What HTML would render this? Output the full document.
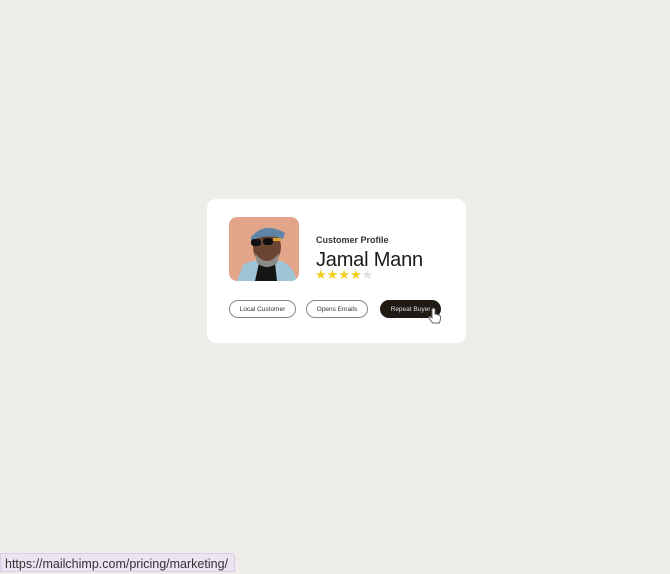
<!DOCTYPE html>
<html><head><style>
body{margin:0;width:670px;height:572px;background:#efedea;font-family:"Liberation Sans",sans-serif;position:relative;overflow:hidden}
.card{position:absolute;left:207px;top:199px;width:259px;height:144px;background:#fff;border-radius:9px}
.photo{position:absolute;left:22px;top:18px;width:70px;height:64px;border-radius:8px;background:#e2a58a;overflow:hidden}
.t1{position:absolute;left:109px;top:36px;font-size:9px;font-weight:bold;color:#333}
.t2{position:absolute;left:109px;top:50px;font-size:20px;color:#1c1a17;letter-spacing:-0.2px}
.stars{position:absolute;left:108px;top:68px;font-size:13px;color:#f3cd1b;letter-spacing:0px}
.pill{position:absolute;top:101px;height:16px;border:1.5px solid #888;border-radius:10px;font-size:6.5px;display:flex;align-items:center;justify-content:center;color:#333;box-sizing:content-box}
.bar{position:absolute;left:0;top:553px;width:235px;height:19px;background:#ece3f3;border:1px solid #d8cde4;border-radius:0 4px 0 0;font-size:12.5px;line-height:20px;padding-left:4px;color:#333;box-sizing:border-box}
</style></head><body>
<div class="card">
 <div class="photo">
  <svg width="70" height="64" viewBox="0 0 70 64">
   <path d="M8 64 L14 48 Q24 42 34 44 L52 44 Q64 48 68 64Z" fill="#9fc4d6"/>
   <path d="M26 64 L30 46 L46 46 L48 64Z" fill="#151515"/>
   <ellipse cx="38" cy="30" rx="14" ry="17" fill="#6b4532"/>
   <path d="M26 36 Q38 52 50 36 L48 46 Q38 54 28 46Z" fill="#8a8a88"/>
   <path d="M22 20 Q36 4 56 16 L54 22 Q38 16 22 24Z" fill="#5e84a6"/>
   <rect x="22" y="22" width="10" height="7" rx="3" fill="#111"/>
   <rect x="34" y="21" width="10" height="7" rx="3" fill="#111"/>
   <rect x="44" y="21" width="8" height="3" fill="#d8a030"/>
  </svg>
 </div>
 <div class="t1">Customer Profile</div>
 <div class="t2">Jamal Mann</div>
 <div class="stars">★★★★<span style="color:#ddd">★</span></div>
 <div class="pill" style="left:22px;width:65px">Local Customer</div>
 <div class="pill" style="left:99px;width:60px">Opens Emails</div>
 <div class="pill" style="left:173px;width:59px;background:#201a15;border-color:#201a15;color:#ddd">Repeat Buyer</div>
 <svg style="position:absolute;left:220px;top:108px" width="16" height="18" viewBox="0 0 16 18">
  <path d="M5 2 Q6.5 0.5 8 2 L8 7 L12 8 Q14 9 13.5 12 L12.5 16 L5.5 16 L2 11 Q1.5 9.5 3 9.5 L5 11Z" fill="#fff" stroke="#666" stroke-width="1"/>
 </svg>
</div>
<div class="bar">https://mailchimp.com/pricing/marketing/</div>
</body></html>
